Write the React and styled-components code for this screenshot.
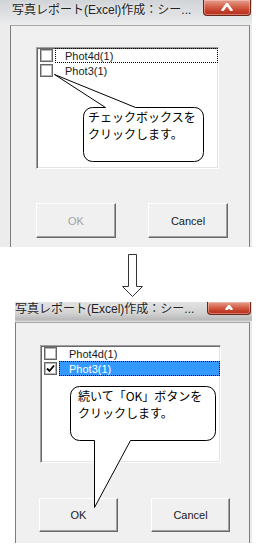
import React from "react";
import styled, { createGlobalStyle } from "styled-components";

const Global = createGlobalStyle`
  html, body { margin: 0; padding: 0; background: #fff; }
  body {
    width: 261px; height: 551px; overflow: hidden;
    font-family: "Liberation Sans", "Noto Sans CJK JP", sans-serif;
  }
`;

const Page = styled.div`
  display: flex;
  flex-direction: column;
  width: 261px;
  height: 551px;
`;

const Dialog = styled.div`
  display: flex;
  flex-direction: column;
  margin-left: ${(p) => p.$left}px;
  width: ${(p) => p.$width}px;
  background: ${(p) => p.$frame};
`;

const TitleBar = styled.div`
  display: flex;
  justify-content: space-between;
  align-items: flex-start;
  height: ${(p) => p.$h}px;
  overflow: hidden;
  background: ${(p) => p.$bg};
`;

const TitleText = styled.div`
  margin-left: ${(p) => p.$indent}px;
  margin-top: ${(p) => p.$top}px;
  font-family: "Liberation Sans", "Noto Sans CJK JP", sans-serif;
  font-size: 12px;
  line-height: 16px;
  color: #222;
  white-space: nowrap;
  text-shadow: 0 0 4px rgba(255, 255, 255, 0.8);
`;

const CloseButton = styled.div`
  display: flex;
  justify-content: center;
  align-items: flex-start;
  padding-top: ${(p) => p.$pt}px;
  width: ${(p) => p.$w}px;
  height: ${(p) => p.$h}px;
  margin-right: 1px;
  box-sizing: border-box;
  background: linear-gradient(#e3a090 0%, #d8684f 40%, #c23d27 75%, #b0301e 100%);
  border: 1px solid #6b2517;
  border-top: none;
  border-radius: 0 0 4px 4px;
  box-shadow: inset 0 0 0 1px rgba(255, 210, 200, 0.45);
`;

const Client = styled.div`
  position: relative;
  display: flex;
  flex-direction: column;
  margin-left: ${(p) => p.$ml}px;
  width: ${(p) => p.$w}px;
  height: ${(p) => p.$h}px;
  box-sizing: border-box;
  background: #f0f0f0;
  border-left: 1px solid #7d7d7d;
  border-right: 1px solid #7d7d7d;
  border-top: 1px solid #a8a8a8;
`;

const ListBox = styled.div`
  display: flex;
  flex-direction: column;
  margin-left: ${(p) => p.$ml}px;
  margin-top: ${(p) => p.$mt}px;
  width: ${(p) => p.$w}px;
  height: ${(p) => p.$h}px;
  box-sizing: border-box;
  background: #fff;
  border: 1px solid;
  border-color: #a0a0a0 #fff #fff #a0a0a0;
  box-shadow: inset 1px 1px 0 #696969, inset -1px -1px 0 #e3e3e3;
`;

const Row = styled.div`
  display: flex;
  align-items: center;
  height: 15px;
`;

const Check = styled.div`
  display: flex;
  align-items: center;
  justify-content: center;
  flex: none;
  width: 13px;
  height: 13px;
  margin-left: 3px;
  box-sizing: border-box;
  background: #fff;
  border: 1px solid #666;
  box-shadow: inset 0 0 0 1px #b5b5b5;
`;

const Label = styled.div`
  flex: 1;
  display: flex;
  align-items: center;
  height: 15px;
  margin-left: 2px;
  padding-left: 9px;
  box-sizing: border-box;
  font-size: 11px;
  font-family: "Liberation Sans", Arial, sans-serif;
  color: ${(p) => (p.$selected ? "#fff" : "#1a1a1a")};
  background: ${(p) => (p.$selected ? "#3399ff" : "transparent")};
  border: 1px ${(p) => (p.$focus ? "dotted #000" : "solid transparent")};
`;

const ButtonRow = styled.div`
  display: flex;
  gap: ${(p) => p.$gap}px;
  margin-left: ${(p) => p.$ml}px;
  margin-top: ${(p) => p.$mt}px;
`;

const Button = styled.button`
  width: ${(p) => p.$w}px;
  height: ${(p) => p.$h}px;
  padding: 0;
  box-sizing: border-box;
  background: #f0f0f0;
  border: 1px solid;
  border-color: #fff #696969 #696969 #fff;
  box-shadow: inset -1px -1px 0 #a0a0a0;
  font-family: "Liberation Sans", Arial, sans-serif;
  font-size: 11px;
  color: ${(p) => (p.disabled ? "#a3a3a3" : "#1a1a1a")};
`;

const CalloutWrap = styled.div`
  position: absolute;
  left: ${(p) => p.$x}px;
  top: ${(p) => p.$y}px;
  width: ${(p) => p.$w}px;
  height: ${(p) => p.$h}px;
  z-index: 2;
`;

const CalloutShape = styled.svg`
  position: absolute;
  left: 0;
  top: 0;
  overflow: visible;
`;

const CalloutText = styled.div`
  position: relative;
  padding: ${(p) => p.$pad};
  font-family: "Noto Sans CJK JP", sans-serif;
  font-size: 12px;
  line-height: 17px;
  color: #000;
  white-space: nowrap;
`;

const ArrowRow = styled.div`
  display: flex;
  height: 55px;
  padding-left: 122px;
  padding-top: 7px;
  box-sizing: border-box;
`;

function calloutPath(w, h, r, ptr) {
  const { side, x1, x2, tx, ty } = ptr;
  let d = `M${r},0 `;
  if (side === "top") d += `L${x1},0 L${tx},${ty} L${x2},0 `;
  d += `L${w - r},0 A${r},${r} 0 0 1 ${w},${r} L${w},${h - r} A${r},${r} 0 0 1 ${w - r},${h} `;
  if (side === "bottom") d += `L${x2},${h} L${tx},${ty} L${x1},${h} `;
  d += `L${r},${h} A${r},${r} 0 0 1 0,${h - r} L0,${r} A${r},${r} 0 0 1 ${r},0 Z`;
  return d;
}

function Callout({ x, y, w, h, ptr, pad, lines }) {
  return (
    <CalloutWrap $x={x} $y={y} $w={w} $h={h}>
      <CalloutShape width={w} height={h}>
        <path
          d={calloutPath(w - 1, h - 1, 9, ptr)}
          transform="translate(0.5,0.5)"
          fill="#fff"
          stroke="#000"
          strokeWidth="1"
        />
      </CalloutShape>
      <CalloutText $pad={pad}>
        {lines.map((l, i) => (
          <div key={i}>{l}</div>
        ))}
      </CalloutText>
    </CalloutWrap>
  );
}

function CloseGlyph({ w, h }) {
  return (
    <svg width={w} height={h} viewBox={`0 0 ${w} ${h}`}>
      <path
        d={`M2 ${h} L${w / 2} 1 L${w - 2} ${h}`}
        fill="none"
        stroke="#fff"
        strokeWidth="2.6"
        strokeLinejoin="round"
      />
    </svg>
  );
}

function CheckMark() {
  return (
    <svg width="9" height="9" viewBox="0 0 9 9">
      <path d="M1 4.5 L3.5 7 L8 1.5" fill="none" stroke="#000" strokeWidth="1.8" />
    </svg>
  );
}

function Item({ label, checked, focus, selected }) {
  return (
    <Row>
      <Check>{checked && <CheckMark />}</Check>
      <Label $focus={focus} $selected={selected}>
        {label}
      </Label>
    </Row>
  );
}

const TITLE = "写真レポート(Excel)作成：シー...";

export default function App() {
  return (
    <>
      <Global />
      <Page>
        <Dialog $left={0} $width={252} $frame="#ececec">
          <TitleBar $h={25} $bg="linear-gradient(#d2d5d8 0%, #dfe1e3 60%, #ececec 100%)">
            <TitleText $indent={12} $top={2}>
              {TITLE}
            </TitleText>
            <CloseButton $w={48} $h={16} $pt={3}>
              <CloseGlyph w={14} h={8} />
            </CloseButton>
          </TitleBar>
          <Client $ml={10} $w={240} $h={222}>
            <ListBox $ml={25} $mt={21} $w={183} $h={122}>
              <Item label="Phot4d(1)" focus />
              <Item label="Phot3(1)" />
            </ListBox>
            <ButtonRow $ml={25} $mt={34} $gap={32}>
              <Button $w={80} $h={35} disabled>
                OK
              </Button>
              <Button $w={80} $h={35}>
                Cancel
              </Button>
            </ButtonRow>
            <Callout
              x={72}
              y={81}
              w={121}
              h={55}
              ptr={{ side: "top", x1: 22, x2: 52, tx: -29, ty: -33 }}
              pad="1px 0 0 5px"
              lines={["チェックボックスを", "クリックします。"]}
            />
          </Client>
        </Dialog>

        <ArrowRow>
          <svg width="22" height="44" viewBox="0 0 22 44">
            <path
              d="M6.5 0.5 L14.5 0.5 L14.5 32.5 L20.5 32.5 L10.5 42.5 L0.5 32.5 L6.5 32.5 Z"
              fill="#fff"
              stroke="#333"
              strokeWidth="1"
            />
          </svg>
        </ArrowRow>

        <Dialog $left={15} $width={237} $frame="#ececec">
          <TitleBar $h={20} $bg="linear-gradient(#e2e2e2 0%, #d2d2d2 55%, #b8b8b8 90%, #e8e8e8 100%)">
            <TitleText $indent={0} $top={-1}>
              {TITLE}
            </TitleText>
            <CloseButton $w={44} $h={13} $pt={3}>
              <CloseGlyph w={10} h={5} />
            </CloseButton>
          </TitleBar>
          <Client $ml={0} $w={235} $h={221}>
            <ListBox $ml={24} $mt={22} $w={181} $h={118}>
              <Item label="Phot4d(1)" />
              <Item label="Phot3(1)" checked focus selected />
            </ListBox>
            <ButtonRow $ml={23} $mt={35} $gap={33}>
              <Button $w={79} $h={34}>OK</Button>
              <Button $w={79} $h={34}>Cancel</Button>
            </ButtonRow>
            <Callout
              x={54}
              y={63}
              w={146}
              h={55}
              ptr={{ side: "bottom", x1: 24, x2: 60, tx: 24, ty: 121 }}
              pad="1px 0 0 8px"
              lines={["続いて「OK」ボタンを", "クリックします。"]}
            />
          </Client>
        </Dialog>
      </Page>
    </>
  );
}
